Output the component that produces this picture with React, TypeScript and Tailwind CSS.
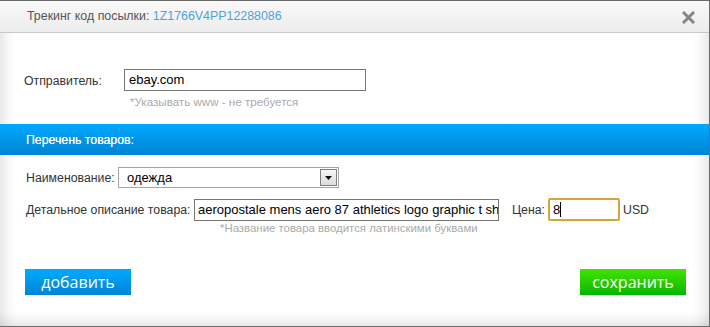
import React from 'react';

export default function App() {
  return (
    <div className="w-[710px] h-[327px] bg-white font-['Liberation_Sans',Arial,sans-serif] text-[12.3px] text-[#333]">
      <div className="relative w-full h-full border-t border-r border-b border-[#6b6b6b] shadow-[inset_14px_0_14px_-10px_rgba(0,0,0,0.12),inset_-14px_0_14px_-10px_rgba(0,0,0,0.12),inset_0_-14px_14px_-10px_rgba(0,0,0,0.12)] flex flex-col">
        {/* header */}
        <div className="h-[32px] shrink-0 flex items-center justify-between pl-[27px] pr-[14px] bg-gradient-to-b from-[#f9f9f9] to-[#ececec] border-b border-[#c9c9c9]">
          <div className="text-[12.4px] text-[#555]">
            Трекинг код посылки: <span className="text-[#4ba3e0]">1Z1766V4PP12288086</span>
          </div>
          <svg width="13" height="13" viewBox="0 0 13 13" className="mt-[1px]">
            <path d="M2 2 L11 11 M11 2 L2 11" stroke="#868686" strokeWidth="3" strokeLinecap="square" />
          </svg>
        </div>

        {/* sender */}
        <div className="flex items-start pl-[24px] mt-[36px]">
          <div className="w-[100px] pt-[3px] text-[#333]">Отправитель:</div>
          <div className="flex flex-col">
            <div className="w-[242px] h-[22px] border border-[#767676] flex items-center px-[4px] text-[13px] text-black">ebay.com</div>
            <div className="pl-[6px] mt-[2px] text-[11.6px] text-[#aaa]">*Указывать www - не требуется</div>
          </div>
        </div>

        {/* section bar */}
        <div className="mt-[14px] h-[31px] shrink-0 flex items-center pl-[26px] bg-gradient-to-b from-[#00a9ff] to-[#0083d2] text-white text-[12.3px] [text-shadow:0_0_0.4px_#fff]">
          Перечень товаров:
        </div>

        {/* name select */}
        <div className="flex items-center pl-[26px] mt-[12px]">
          <div className="w-[92px] text-[#333]">Наименование:</div>
          <div className="w-[221px] h-[21px] border border-[#a5a5a5] flex items-center justify-between pl-[8px] pr-[1px] text-[13px] text-black">
            <span>одежда</span>
            <div className="w-[17px] h-[17px] border border-[#808080] bg-gradient-to-b from-[#f6f6f6] to-[#dcdcdc] flex items-center justify-center">
              <svg width="7" height="4" viewBox="0 0 7 4"><path d="M0 0 H7 L3.5 4 Z" fill="#111" /></svg>
            </div>
          </div>
        </div>

        {/* description */}
        <div className="flex items-center pl-[26px] mt-[10px]">
          <div className="w-[168px] text-[#333]">Детальное описание товара:</div>
          <div className="w-[305px] h-[22px] border border-[#767676] flex items-center pl-[3px] text-[13px] text-black overflow-hidden whitespace-nowrap">
            aeropostale mens aero 87 athletics logo graphic t shirt
          </div>
          <div className="ml-[13px] w-[36px] text-[#333]">Цена:</div>
          <div className="w-[72px] h-[23px] border-[2px] border-[#d9a33c] rounded-[2px] flex items-center pl-[3px] text-[13px] text-black">
            8<span className="w-[1px] h-[15px] bg-black"></span>
          </div>
          <div className="ml-[3px] text-[#333]">USD</div>
        </div>
        <div className="pl-[220px] mt-[-1px] text-[11.4px] text-[#aaa]">*Название товара вводится латинскими буквами</div>

        {/* buttons */}
        <div className="flex justify-between pl-[25px] pr-[23px] mt-[31px]">
          <button className="w-[106px] h-[26px] bg-gradient-to-b from-[#00aaff] to-[#0085d4] text-white text-[16px] font-['Open_Sans',sans-serif]">добавить</button>
          <button className="w-[106px] h-[26px] bg-gradient-to-b from-[#3fe400] to-[#00b500] text-white text-[16px] font-['Open_Sans',sans-serif]">сохранить</button>
        </div>
      </div>
    </div>
  );
}
